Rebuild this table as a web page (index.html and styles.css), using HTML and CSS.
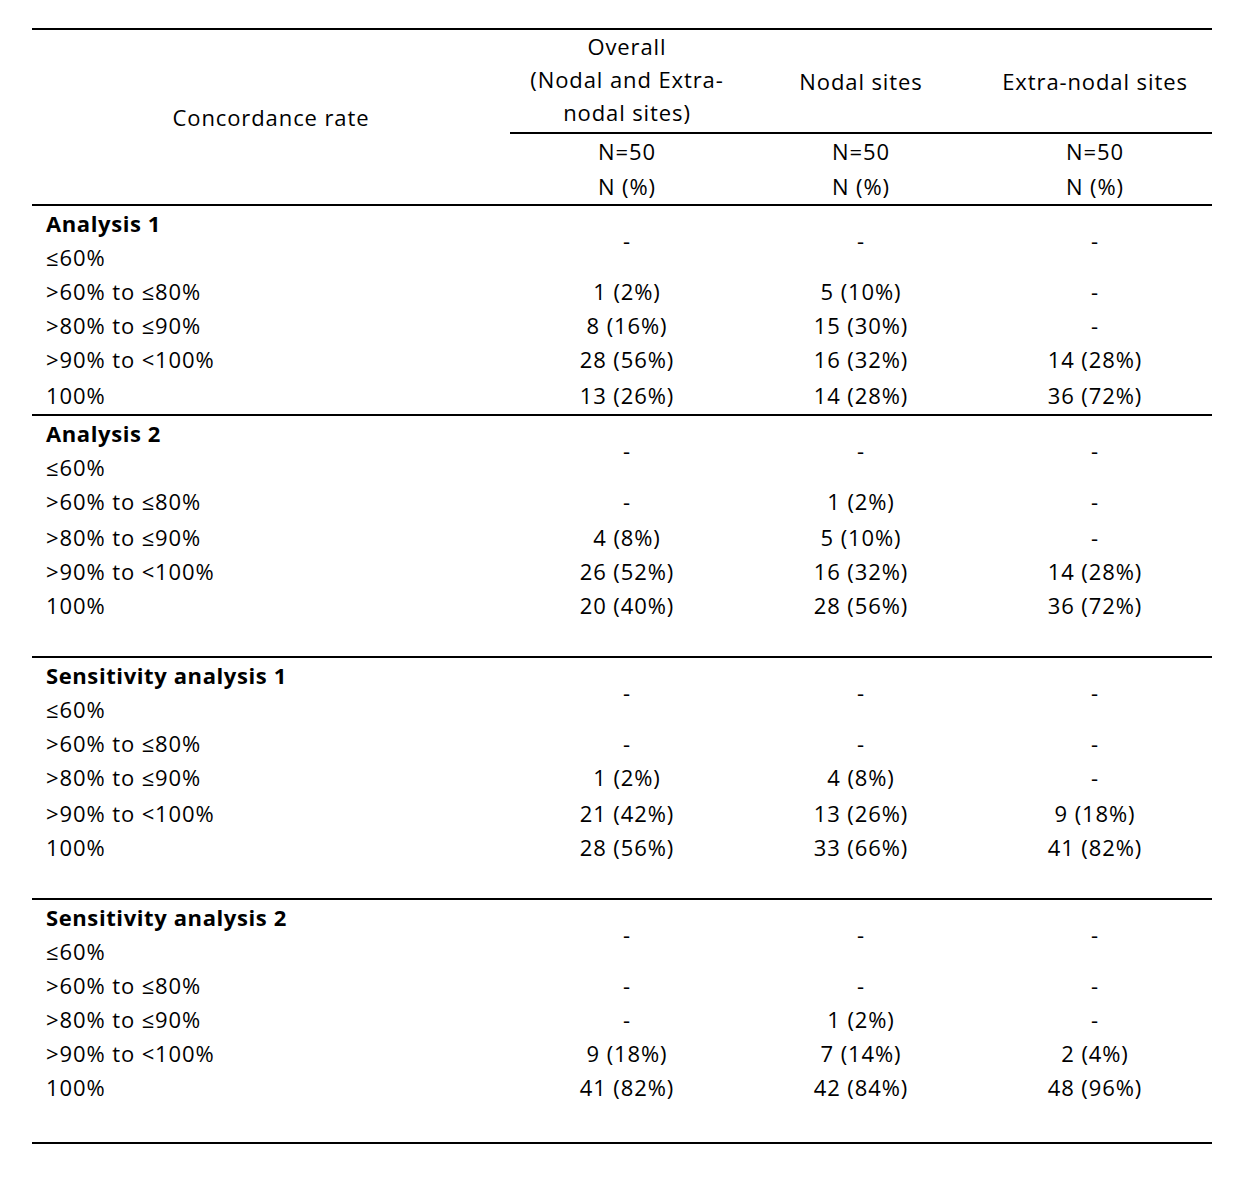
FILE: index.html
```html
<!DOCTYPE html>
<html lang="en">
<head>
<meta charset="utf-8">
<title>Concordance rate</title>
<link rel="stylesheet" href="styles.css">
</head>
<body>
<table class="ctable">
  <colgroup>
    <col class="c-label">
    <col class="c-val">
    <col class="c-val">
    <col class="c-val">
  </colgroup>
  <thead>
    <tr class="h1">
      <th rowspan="2" class="label-head">Concordance rate</th>
      <th class="sub overall">Overall<br>(Nodal and Extra-<br>nodal sites)</th>
      <th class="sub">Nodal sites</th>
      <th class="sub">Extra-nodal sites</th>
    </tr>
    <tr class="h2">
      <th>N=50<br>N (%)</th>
      <th>N=50<br>N (%)</th>
      <th>N=50<br>N (%)</th>
    </tr>
  </thead>
  <tbody class="group">
    <tr class="first"><td class="lbl"><b>Analysis 1</b><br>≤60%</td><td>-</td><td>-</td><td>-</td></tr>
    <tr><td class="lbl">&gt;60% to ≤80%</td><td>1 (2%)</td><td>5 (10%)</td><td>-</td></tr>
    <tr><td class="lbl">&gt;80% to ≤90%</td><td>8 (16%)</td><td>15 (30%)</td><td>-</td></tr>
    <tr class="gap"><td class="lbl">&gt;90% to &lt;100%</td><td>28 (56%)</td><td>16 (32%)</td><td>14 (28%)</td></tr>
    <tr class="gap"><td class="lbl">100%</td><td>13 (26%)</td><td>14 (28%)</td><td>36 (72%)</td></tr>
  </tbody>
  <tbody class="group">
    <tr class="first"><td class="lbl"><b>Analysis 2</b><br>≤60%</td><td>-</td><td>-</td><td>-</td></tr>
    <tr class="gap"><td class="lbl">&gt;60% to ≤80%</td><td>-</td><td>1 (2%)</td><td>-</td></tr>
    <tr><td class="lbl">&gt;80% to ≤90%</td><td>4 (8%)</td><td>5 (10%)</td><td>-</td></tr>
    <tr><td class="lbl">&gt;90% to &lt;100%</td><td>26 (52%)</td><td>16 (32%)</td><td>14 (28%)</td></tr>
    <tr><td class="lbl">100%</td><td>20 (40%)</td><td>28 (56%)</td><td>36 (72%)</td></tr>
    <tr class="spacer"><td></td><td></td><td></td><td></td></tr>
  </tbody>
  <tbody class="group">
    <tr class="first"><td class="lbl"><b>Sensitivity analysis 1</b><br>≤60%</td><td>-</td><td>-</td><td>-</td></tr>
    <tr><td class="lbl">&gt;60% to ≤80%</td><td>-</td><td>-</td><td>-</td></tr>
    <tr class="gap"><td class="lbl">&gt;80% to ≤90%</td><td>1 (2%)</td><td>4 (8%)</td><td>-</td></tr>
    <tr><td class="lbl">&gt;90% to &lt;100%</td><td>21 (42%)</td><td>13 (26%)</td><td>9 (18%)</td></tr>
    <tr><td class="lbl">100%</td><td>28 (56%)</td><td>33 (66%)</td><td>41 (82%)</td></tr>
    <tr class="spacer"><td></td><td></td><td></td><td></td></tr>
  </tbody>
  <tbody class="group">
    <tr class="first"><td class="lbl"><b>Sensitivity analysis 2</b><br>≤60%</td><td>-</td><td>-</td><td>-</td></tr>
    <tr><td class="lbl">&gt;60% to ≤80%</td><td>-</td><td>-</td><td>-</td></tr>
    <tr><td class="lbl">&gt;80% to ≤90%</td><td>-</td><td>1 (2%)</td><td>-</td></tr>
    <tr><td class="lbl">&gt;90% to &lt;100%</td><td>9 (18%)</td><td>7 (14%)</td><td>2 (4%)</td></tr>
    <tr><td class="lbl">100%</td><td>41 (82%)</td><td>42 (84%)</td><td>48 (96%)</td></tr>
    <tr class="spacer tall"><td></td><td></td><td></td><td></td></tr>
  </tbody>
</table>
</body>
</html>
```
FILE: styles.css
```css
html, body {
  margin: 0;
  padding: 0;
  background: #ffffff;
}
body {
  font-family: "Open Sans", "Lato", sans-serif;
  font-size: 22px;
  font-weight: 500;
  letter-spacing: 0.9px;
  color: #000000;
}
.ctable {
  margin: 28px 0 0 32px;
  width: 1180px;
  border-collapse: separate;
  border-spacing: 0;
  border-top: 2px solid #000;
  border-bottom: 2px solid #000;
  table-layout: fixed;
}
.c-label { width: 478px; }
.c-val { width: 234px; }
th, td {
  padding: 0;
  font-weight: 500;
  line-height: 34px;
  text-align: center;
  vertical-align: middle;
}
.h1 th.sub {
  border-bottom: 2px solid #000;
}
.h1 th.overall {
  line-height: 33px;
  padding-bottom: 3px;
}
.label-head {
  border-bottom: 2px solid #000;
}
.h2 th {
  line-height: 35px;
  border-bottom: 2px solid #000;
}
.group + .group tr.first td {
  border-top: 2px solid #000;
}
td.lbl {
  text-align: left;
  padding-left: 14px;
}
.group tr.gap td {
  padding-bottom: 2px;
}
.spacer td {
  height: 34px;
}
.spacer.tall td {
  height: 38px;
}
b {
  font-weight: bold;
  letter-spacing: 0.6px;
}
```
